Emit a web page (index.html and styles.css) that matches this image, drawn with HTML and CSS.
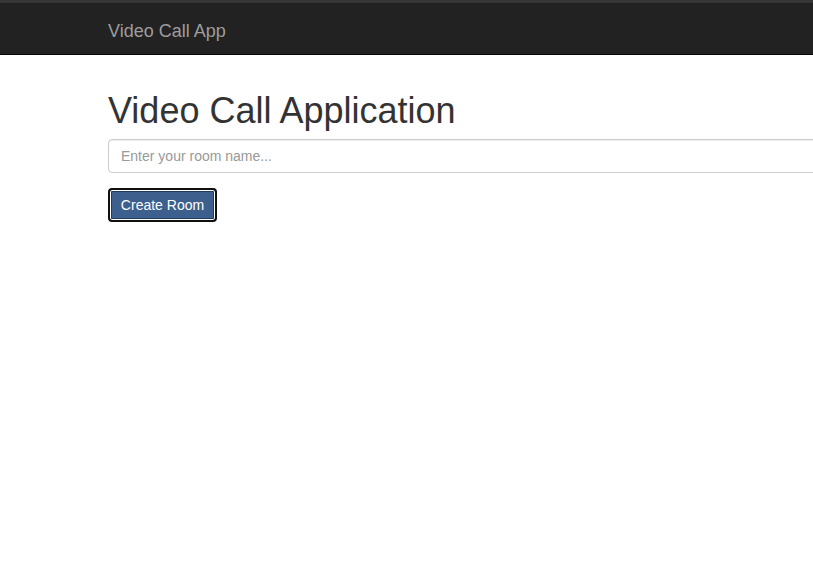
FILE: index.html
```html
<!DOCTYPE html>
<html lang="en">
<head>
<meta charset="utf-8">
<title>Video Call App</title>
<link rel="stylesheet" href="styles.css">
</head>
<body>
<nav class="navbar">
  <div class="navbar-inner">
    <a class="brand" href="#">Video Call App</a>
  </div>
</nav>
<main class="content">
  <h1 class="title">Video Call Application</h1>
  <input class="room-input" type="text" placeholder="Enter your room name...">
  <div class="actions">
    <button class="btn-create" type="button">Create Room</button>
  </div>
</main>
</body>
</html>
```

FILE: styles.css
```css
html, body {
  margin: 0;
  padding: 0;
  overflow: hidden;
  background: #fff;
  font-family: "Liberation Sans", Arial, Helvetica, sans-serif;
}

.navbar {
  background: #222;
  border-top: 3px solid #363636;
  border-bottom: 1px solid #080808;
  height: 51px;
  box-sizing: content-box;
}

.navbar-inner {
  padding: 18px 0 0 108px;
}

.brand {
  display: inline-block;
  font-size: 18px;
  line-height: 20px;
  color: #9d9d9d;
  text-decoration: none;
}

.content {
  padding: 36px 0 0 108px;
  overflow: hidden;
}

.title {
  margin: 0;
  font-size: 36px;
  line-height: 40px;
  font-weight: 400;
  color: #333;
}

.room-input {
  display: block;
  margin-top: 8px;
  width: 760px;
  height: 34px;
  box-sizing: border-box;
  padding: 6px 12px;
  font-family: "Liberation Sans", Arial, sans-serif;
  font-size: 14px;
  line-height: 20px;
  color: #555;
  border: 1px solid #ccc;
  border-radius: 4px;
  box-shadow: inset 0 1px 1px rgba(0,0,0,.075);
  outline: none;
}

.room-input::placeholder {
  color: #999;
}

.actions {
  margin-top: 15px;
}

.btn-create {
  display: block;
  width: 109px;
  height: 34px;
  box-sizing: border-box;
  padding: 0;
  font-family: "Liberation Sans", Arial, sans-serif;
  font-size: 14px;
  line-height: 20px;
  color: #fff;
  background: #3d5f8e;
  border: 2px solid #101010;
  border-radius: 4px;
  box-shadow: inset 0 0 0 1px #fff, inset 0 0 0 2px #1d3c60;
  cursor: pointer;
}
```
